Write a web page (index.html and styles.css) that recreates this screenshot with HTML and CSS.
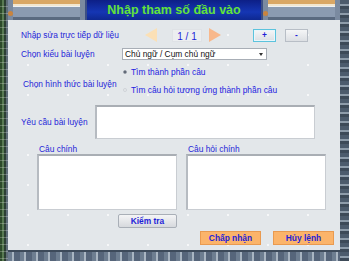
FILE: index.html
```html
<!DOCTYPE html>
<html lang="vi">
<head>
  <meta charset="UTF-8" />
  <title>Nhập tham số đầu vào</title>
  <link rel="stylesheet" href="styles.css">
</head>
<body>
  <div class="frame">
    <div class="side side-left"></div>

    <div class="center">
      <header class="topbar">
        <div class="wood"><span class="bolt"></span></div>
        <h1 class="title">Nhập tham số đầu vào</h1>
        <div class="wood"><span class="bolt"></span></div>
      </header>

      <main class="panel">
        <div class="row row-data">
          <span class="label">Nhập sửa trực tiếp dữ liệu</span>
          <div class="pager">
            <span class="arrow arrow-left"></span>
            <span class="page">1 / 1</span>
            <span class="arrow arrow-right"></span>
          </div>
          <div class="small-btns">
            <button class="btn-small active">+</button>
            <button class="btn-small">-</button>
          </div>
        </div>

        <div class="row row-kind">
          <span class="label">Chọn kiểu bài luyện</span>
          <div class="select">
            <span>Chủ ngữ / Cụm chủ ngữ</span>
            <span class="caret"></span>
          </div>
        </div>

        <div class="row row-form">
          <span class="label">Chọn hình thức bài luyện</span>
          <div class="radios">
            <label class="radio"><span class="dot on"></span>Tìm thành phần câu</label>
            <label class="radio"><span class="dot"></span>Tìm câu hỏi tương ứng thành phần câu</label>
          </div>
        </div>

        <div class="row row-req">
          <span class="label">Yêu cầu bài luyện</span>
          <div class="box box-req"></div>
        </div>

        <div class="pair">
          <div class="col">
            <span class="label">Câu chính</span>
            <div class="box box-big"></div>
          </div>
          <div class="col">
            <span class="label">Câu hỏi chính</span>
            <div class="box box-big"></div>
          </div>
        </div>

        <div class="check-row">
          <button class="btn-grey">Kiểm tra</button>
        </div>

        <div class="actions">
          <button class="btn-orange">Chấp nhận</button>
          <button class="btn-orange">Hủy lệnh</button>
        </div>
      </main>

      <footer class="bottombar"></footer>
    </div>

    <div class="side side-right"></div>
  </div>
</body>
</html>
```
FILE: styles.css
```css
:root {
  --panel: #e3e7ea;
  --blue-text: #1f1fd8;
  --wood: #d9a765;
  --steel: #7d8fa6;
  --orange: #fbb46a;
}

* {
  box-sizing: border-box;
}

body {
  margin: 0;
  font-family: 'Liberation Sans', Arial, sans-serif;
  font-size: 8.4px;
  background: #3a4654;
}

.frame {
  display: flex;
  width: 349px;
  height: 261px;
}

.side {
  flex: 0 0 auto;
}

.side-left {
  width: 8px;
  background:
    repeating-linear-gradient(180deg, transparent 0 6px, rgba(255,255,255,0.25) 6px 7px),
    linear-gradient(90deg, #2d4a2a 0 2px, #587a52 2px 4px, #2c3f33 4px 6px, #5f6d78 6px 8px);
}

.side-right {
  width: 9px;
  background:
    repeating-linear-gradient(180deg, #4c5b6c 0 4px, #8e9caa 4px 6px, #3d4a58 6px 9px),
    #4c5b6c;
}

.center {
  flex: 1;
  display: flex;
  flex-direction: column;
}

/* top bar */
.topbar {
  height: 20px;
  display: flex;
}

.wood {
  flex: 1;
  position: relative;
  background: linear-gradient(180deg, var(--wood) 0 4px, #f2e6cf 4px 6px, #edf0f3 6px 7px, #8b9bb1 7px 17px, #5a6a80 17px 20px);
  border-left: 5px solid #7a8aa0;
  border-right: 5px solid #7a8aa0;
}

.bolt {
  position: absolute;
  left: -5px;
  top: 11px;
  width: 5px;
  height: 5px;
  border-radius: 50%;
  background: #c9843f;
}

.title {
  margin: 0;
  width: 178px;
  height: 20px;
  line-height: 20px;
  text-align: center;
  font-size: 12.5px;
  font-weight: bold;
  color: #62e23a;
  background: linear-gradient(180deg, #0d1f86 0%, #1536b4 60%, #0e2890 100%);
  border-left: 2px solid #3c4f84;
  border-right: 2px solid #3c4f84;
}

/* panel */
.panel {
  flex: 1;
  background-color: var(--panel);
  background-image:
    radial-gradient(circle, #f6f7f8 0 1px, transparent 1.5px);
  background-size: 40px 30px;
  padding: 7px 0 0 13px;
  color: var(--blue-text);
}

.row {
  display: flex;
  align-items: center;
}

.label {
  color: var(--blue-text);
  white-space: nowrap;
}

.row-data {
  height: 16px;
}

.row-data .label {
  width: 124px;
}

.pager {
  display: flex;
  align-items: center;
  gap: 15px;
}

.arrow {
  width: 0;
  height: 0;
  border-top: 7px solid transparent;
  border-bottom: 7px solid transparent;
}

.arrow-left {
  border-right: 12px solid #fbe0b6;
}

.arrow-right {
  border-left: 12px solid #f8b88c;
}

.page {
  width: 30px;
  height: 13px;
  line-height: 13px;
  text-align: center;
  font-size: 10px;
  background: #eceef0;
  border: 1px solid #dfe2e6;
  margin: 0 -8px 0 0;
}

.small-btns {
  display: flex;
  gap: 9px;
  margin-left: 32px;
}

button {
  font-family: inherit;
  font-size: 8.4px;
  color: var(--blue-text);
  padding: 0;
}

.btn-small {
  width: 23px;
  height: 13px;
  line-height: 11px;
  background: linear-gradient(180deg, #f5f6f7, #dcdfe3);
  border: 1px solid #b8bec6;
  font-weight: bold;
}

.btn-small.active {
  border: 1px solid #5cc3dd;
  box-shadow: inset 0 0 0 1px #e8f6fb;
}

.row-kind {
  margin-top: 4px;
  height: 14px;
}

.row-kind .label {
  width: 101px;
}

.select {
  width: 145px;
  height: 12px;
  display: flex;
  justify-content: space-between;
  align-items: center;
  padding: 0 3px 0 2px;
  background: #fff;
  border: 1px solid #a8aeb6;
  color: #111;
}

.caret {
  border-left: 2px solid transparent;
  border-right: 2px solid transparent;
  border-top: 3px solid #333;
}

.row-form {
  margin-top: 3px;
  height: 33px;
}

.row-form .label {
  width: 102px;
  padding-left: 2px;
  padding-top: 6px;
}

.radios {
  display: flex;
  flex-direction: column;
  gap: 8px;
  color: #2222e0;
}

.radio {
  display: flex;
  align-items: center;
  gap: 4px;
}

.dot {
  width: 4px;
  height: 4px;
  border-radius: 50%;
  background: #e8eaec;
  border: 1px solid #cfd3d8;
}

.dot.on {
  background: #4c5564;
  border-color: #9aa0aa;
}

.row-req {
  margin-top: 8px;
  height: 34px;
}

.row-req .label {
  width: 74px;
}

.box {
  background: #fff;
  border: 1px solid #c9cdd2;
  border-top: 2px solid #a9aeb4;
  border-left: 2px solid #b6bbc1;
}

.box-req {
  width: 220px;
  height: 34px;
}

.pair {
  display: flex;
  gap: 9px;
  margin: 5px 0 0 16px;
}

.col {
  display: flex;
  flex-direction: column;
}

.col .label {
  padding-left: 2px;
  height: 10px;
  line-height: 10px;
}

.box-big {
  width: 140px;
  height: 56px;
}

.check-row {
  margin: 4px 0 0 97px;
}

.btn-grey {
  width: 59px;
  height: 14px;
  background: linear-gradient(180deg, #f4f5f6, #d6d9dd);
  border: 1px solid #a9afb7;
  border-radius: 2px;
  font-weight: bold;
}

.actions {
  display: flex;
  gap: 12px;
  margin: 3px 0 0 179px;
}

.btn-orange {
  width: 61px;
  height: 14px;
  background: var(--orange);
  border: 1px solid #e99a50;
  font-weight: bold;
}

/* bottom */
.bottombar {
  height: 11px;
  background:
    repeating-linear-gradient(90deg, #6d7d90 0 4px, #a9b5c2 4px 6px, #56657a 6px 12px),
    #56657a;
  border-top: 2px solid #3d4a5a;
}
```
